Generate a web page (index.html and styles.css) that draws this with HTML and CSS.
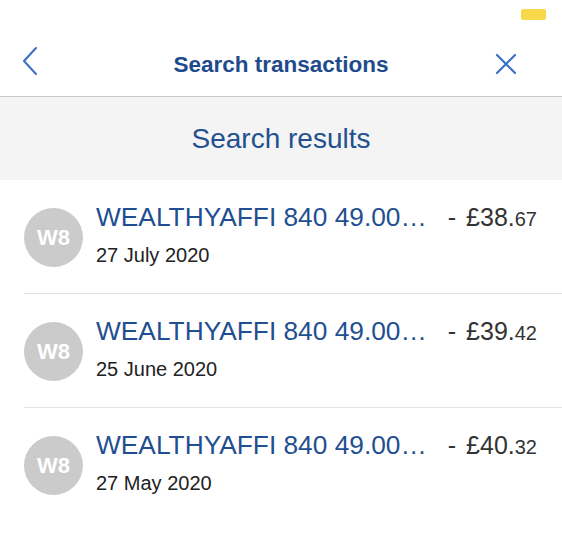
FILE: index.html
```html
<!DOCTYPE html>
<html lang="en">
<head>
    <meta charset="UTF-8">
    <meta name="viewport" content="width=device-width, initial-scale=1.0">
    <title>Search transactions</title>
    <link rel="stylesheet" href="styles.css">
</head>
<body>
    <div class="status-bar">
        <span class="battery"></span>
    </div>

    <header class="top-bar">
        <button class="icon-btn back-btn" aria-label="Back">
            <svg width="16" height="28" viewBox="0 0 16 28"><path d="M14 1 L2 14 L14 27" fill="none" stroke="#3a6fc6" stroke-width="2" stroke-linecap="round" stroke-linejoin="round"/></svg>
        </button>
        <h1 class="page-title">Search transactions</h1>
        <button class="icon-btn close-btn" aria-label="Close">
            <svg width="22" height="22" viewBox="0 0 22 22"><path d="M2 2 L20 20 M20 2 L2 20" fill="none" stroke="#3a6fc6" stroke-width="2.2" stroke-linecap="round"/></svg>
        </button>
    </header>

    <div class="results-head">Search results</div>

    <ul class="tx-list">
        <li class="tx">
            <div class="avatar">W8</div>
            <div class="tx-body">
                <div class="tx-top">
                    <span class="tx-name">WEALTHYAFFI 840 49.00…</span>
                    <span class="tx-amount">- £38.<small>67</small></span>
                </div>
                <div class="tx-date">27 July 2020</div>
            </div>
        </li>
        <li class="tx">
            <div class="avatar">W8</div>
            <div class="tx-body">
                <div class="tx-top">
                    <span class="tx-name">WEALTHYAFFI 840 49.00…</span>
                    <span class="tx-amount">- £39.<small>42</small></span>
                </div>
                <div class="tx-date">25 June 2020</div>
            </div>
        </li>
        <li class="tx">
            <div class="avatar">W8</div>
            <div class="tx-body">
                <div class="tx-top">
                    <span class="tx-name">WEALTHYAFFI 840 49.00…</span>
                    <span class="tx-amount">- £40.<small>32</small></span>
                </div>
                <div class="tx-date">27 May 2020</div>
            </div>
        </li>
    </ul>
</body>
</html>
```

FILE: styles.css
```css
body{
    margin: 0; background: #fff;
    font-family: "Liberation Sans", Arial, sans-serif;
}
/* status bar - only the yellow battery pill is visible */
.status-bar{
    height: 30px; display: flex; justify-content: flex-end; align-items: flex-start;
    padding-right: 16px; box-sizing: border-box;
}
.battery{
    width: 25px; height: 11px; margin-top: 9px;
    background: #f8d94b; border-radius: 2px;
}
/* 3 columns so the title sits in the real middle */
.top-bar{
    height: 67px; box-sizing: border-box;
    display: grid; grid-template-columns: 1fr auto 1fr; align-items: center;
    padding: 0 22px;
    border-bottom: 1px solid #c9c9c9;
}
.icon-btn{
    background: none; border: 0; padding: 0; display: flex; cursor: pointer;
}
.back-btn{ justify-self: start; margin-top: -4px; }
.close-btn{ justify-self: end; margin: 1px 23px 0 0; }
.page-title{
    margin: 3px 0 0; font-size: 22.5px; font-weight: bold; color: #1e4b8b;
}
.results-head{
    height: 83px; background: #f4f4f4;
    display: flex; align-items: center; justify-content: center;
    font-size: 28px; color: #23508f; padding-top: 1px; box-sizing: border-box;
}
.tx-list{
    list-style: none; margin: 0; padding: 0;
}
.tx{
    height: 114px; box-sizing: border-box;
    margin-left: 24px; border-bottom: 1px solid #e2e2e2;
    display: flex; align-items: flex-start;
}
.tx:last-child{ border-bottom: 0; }
.avatar{
    width: 59px; height: 59px; border-radius: 50%; flex: none;
    margin-top: 28px;
    background: #cbcbcb; color: #fff;
    display: flex; align-items: center; justify-content: center;
    font-size: 22px; font-weight: bold;
}
.tx-body{
    flex: 1; padding: 22px 25px 0 13px;
}
.tx-top{
    display: flex; align-items: baseline; justify-content: space-between;
    line-height: 30px;
}
.tx-name{
    font-size: 26.3px; color: #1f4f91;
}
.tx-amount{
    font-size: 25px; color: #333; white-space: nowrap; word-spacing: 3px;
}
.tx-amount small{ font-size: 20px; }
.tx-date{
    margin-top: 9px; font-size: 20px; line-height: 24px; color: #222;
}
```
